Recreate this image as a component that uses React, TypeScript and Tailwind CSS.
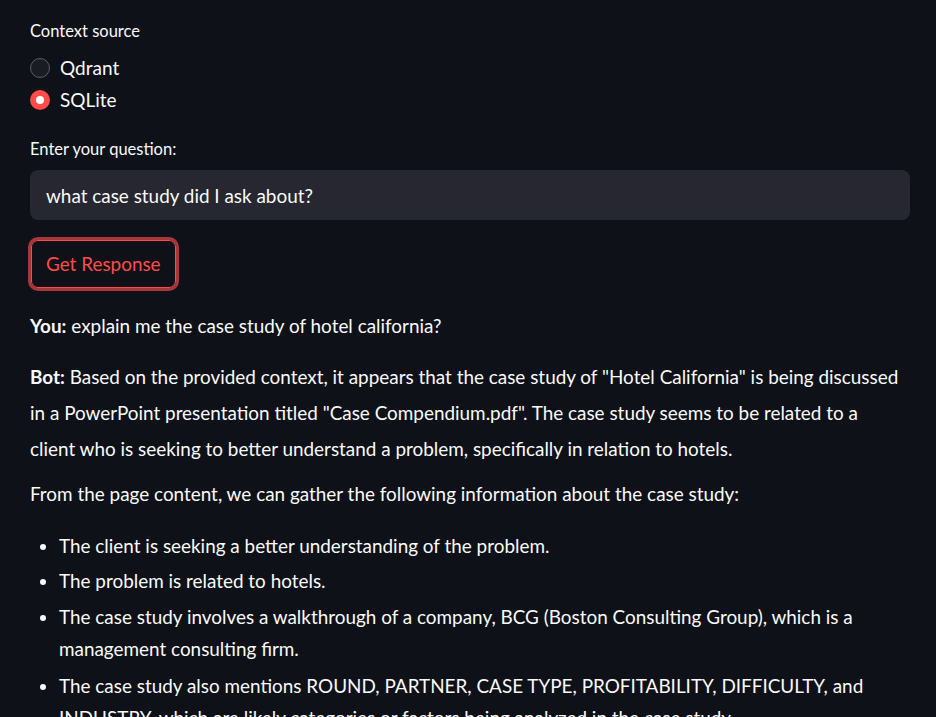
import { useState } from 'react';

const font = { fontFamily: 'Lato, "Noto Sans", sans-serif' };

function Radio({ label, checked, onClick }: { label: string; checked: boolean; onClick: () => void }) {
  return (
    <label className="flex items-center gap-[10px] h-[32px] cursor-pointer" onClick={onClick}>
      {checked ? (
        <span className="w-[20px] h-[20px] rounded-full bg-[#ff4b4b] flex items-center justify-center">
          <span className="w-[8px] h-[8px] rounded-full bg-white" />
        </span>
      ) : (
        <span className="w-[20px] h-[20px] rounded-full border-[1.5px] border-[#5b5e66] bg-[#1a1c23]" />
      )}
      <span className="text-[19px] text-[#fafafa]">{label}</span>
    </label>
  );
}

export default function App() {
  const [source, setSource] = useState('SQLite');
  const [question, setQuestion] = useState('what case study did I ask about?');

  return (
    <div className="bg-[#0e1117] text-[#fafafa] px-[30px] pt-[20px] overflow-hidden h-[717px]" style={font}>
      <div className="text-[16.5px] leading-[22px]">Context source</div>
      <div className="mt-[10px] flex flex-col">
        {['Qdrant', 'SQLite'].map((s) => (
          <Radio key={s} label={s} checked={source === s} onClick={() => setSource(s)} />
        ))}
      </div>

      <div className="mt-[22px] text-[16.5px] leading-[22px]">Enter your question:</div>
      <input
        className="mt-[10px] w-[880px] h-[50px] rounded-[8px] bg-[#262730] px-[16px] text-[18.9px] text-[#fafafa] outline-none"
        value={question}
        onChange={(e) => setQuestion(e.target.value)}
      />

      <div className="mt-[17px] -ml-[2px] inline-block rounded-[10px] border-[3px] border-[#a8373b]">
        <button className="h-[48px] px-[14px] rounded-[7px] border border-[#ff4b4b] bg-[#0e1117] text-[#ff4b4b] text-[18.9px]">
          Get Response
        </button>
      </div>

      <div className="mt-[17px] text-[18.9px]">
        <p className="leading-[36px]">
          <b>You:</b> explain me the case study of hotel california?
        </p>
        <p className="mt-[15px] leading-[36px]">
          <b>Bot:</b> Based on the provided context, it appears that the case study of "Hotel California" is being discussed in a PowerPoint presentation titled "Case Compendium.pdf". The case study seems to be related to a client who is seeking to better understand a problem, specifically in relation to hotels.
        </p>
        <p className="mt-[9px] leading-[36px]">From the page content, we can gather the following information about the case study:</p>
        <ul className="mt-[18px] list-disc pl-[29px]">
          <li className="leading-[32px]">The client is seeking a better understanding of the problem.</li>
          <li className="mt-[3px] leading-[32px]">The problem is related to hotels.</li>
          <li className="mt-[4px] leading-[32px]">
            The case study involves a walkthrough of a company, BCG (Boston Consulting Group), which is a management consulting firm.
          </li>
          <li className="mt-[5px] leading-[32px]">
            The case study also mentions ROUND, PARTNER, CASE TYPE, PROFITABILITY, DIFFICULTY, and INDUSTRY, which are likely categories or factors being analyzed in the case study.
          </li>
        </ul>
      </div>
    </div>
  );
}
